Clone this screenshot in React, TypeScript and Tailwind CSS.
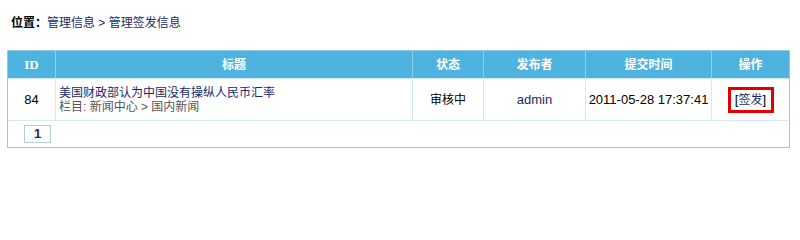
import React from "react";

const font = "font-['Liberation_Sans','Noto_Sans_CJK_SC',sans-serif]";

const HeaderCell = ({ w, children, last }: { w: string; children: React.ReactNode; last?: boolean }) => (
  <div
    className={`${w} flex items-center justify-center font-bold text-white ${
      last ? "" : "border-r border-[#8fcdea]"
    }`}
  >
    {children}
  </div>
);

const App = () => {
  return (
    <div className={`${font} text-[12px] leading-[14px] text-black bg-white w-[800px] h-[214px]`}>
      <div className="h-[50px] pl-[11px] pt-[16px]">
        <span className="font-bold">位置：</span>
        <span className="text-[#1b2a6b]">管理信息 &gt; 管理签发信息</span>
      </div>

      <div className="ml-[7px] w-[783px] border border-[#8fcbe6]">
        <div className="flex h-[27px] bg-[#4eb3df]">
          <HeaderCell w="w-[48px]">
            <span className="font-['Liberation_Serif',serif] text-[13px]">ID</span>
          </HeaderCell>
          <HeaderCell w="w-[357px]">标题</HeaderCell>
          <HeaderCell w="w-[71px]">状态</HeaderCell>
          <HeaderCell w="w-[102px]">发布者</HeaderCell>
          <HeaderCell w="w-[126px]">提交时间</HeaderCell>
          <HeaderCell w="flex-1" last>
            操作
          </HeaderCell>
        </div>

        <div className="flex h-[43px] border-t border-b border-[#d3e9f5]">
          <div className="w-[48px] flex items-center justify-center border-r border-[#d3e9f5] text-[13px]">
            84
          </div>
          <div className="w-[357px] flex flex-col justify-center pl-[3px] border-r border-[#d3e9f5]">
            <span className="text-[#1b2a6b]">美国财政部认为中国没有操纵人民币汇率</span>
            <span className="text-[#555555]">栏目: 新闻中心 &gt; 国内新闻</span>
          </div>
          <div className="w-[71px] flex items-center justify-center border-r border-[#d3e9f5]">审核中</div>
          <div className="w-[102px] flex items-center justify-center border-r border-[#d3e9f5] text-[#1b2a6b] text-[13px]">
            admin
          </div>
          <div className="w-[126px] flex items-center justify-center border-r border-[#d3e9f5] text-[13px]">
            2011-05-28 17:37:41
          </div>
          <div className="flex-1 flex items-center justify-center">
            <div className="w-[46px] h-[26px] border-[3px] border-[#e00000] flex items-center justify-center text-[13px]">
              [<span className="text-[#1b2a6b] text-[12px]">签发</span>]
            </div>
          </div>
        </div>

        <div className="h-[26px] flex items-center pl-[16px]">
          <div className="w-[27px] h-[18px] border border-[#b3cfe0] flex items-center justify-center font-bold text-[13px] text-[#1b2a6b]">
            1
          </div>
        </div>
      </div>
    </div>
  );
};

export default App;
